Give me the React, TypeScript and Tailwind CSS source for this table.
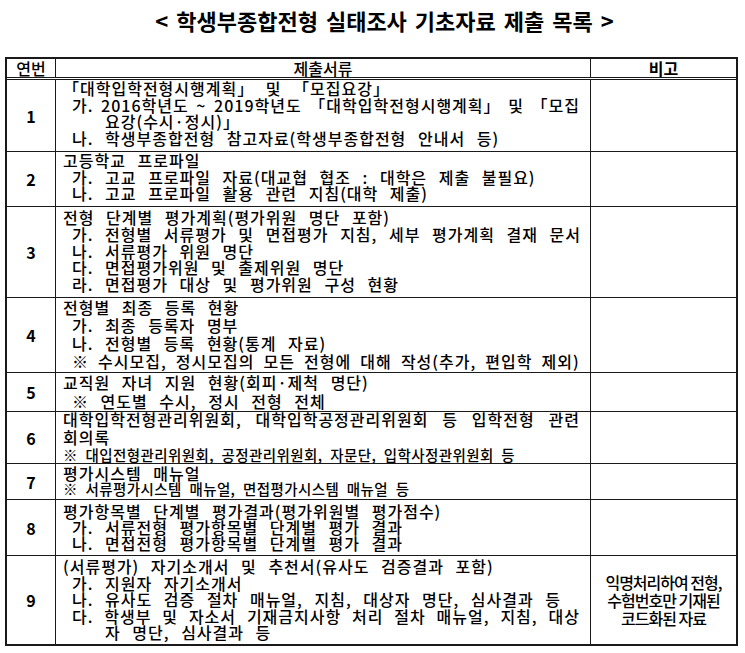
import clsx from "clsx";

type Line = { t: string; i?: number; j?: boolean; s?: boolean; tight?: boolean };
type Row = { no: string; h: string; lead: string; lines: Line[]; note?: string[] };

const rows: Row[] = [
  {
    no: "1",
    h: "h-[72px]",
    lead: "leading-[16.5px]",
    lines: [
      { t: "「대학입학전형시행계획」 및 「모집요강」" },
      { t: "가. 2016학년도 ~ 2019학년도 「대학입학전형시행계획」 및 「모집", i: 1, j: true },
      { t: "요강(수시·정시)」", i: 2 },
      { t: "나. 학생부종합전형 참고자료(학생부종합전형 안내서 등)", i: 1 },
    ],
  },
  {
    no: "2",
    h: "h-[55px]",
    lead: "leading-[16.5px]",
    lines: [
      { t: "고등학교 프로파일" },
      { t: "가. 고교 프로파일 자료(대교협 협조 : 대학은 제출 불필요)", i: 1 },
      { t: "나. 고교 프로파일 활용 관련 지침(대학 제출)", i: 1 },
    ],
  },
  {
    no: "3",
    h: "h-[91px]",
    lead: "leading-[16.8px] pt-[2px]",
    lines: [
      { t: "전형 단계별 평가계획(평가위원 명단 포함)" },
      { t: "가. 전형별 서류평가 및 면접평가 지침, 세부 평가계획 결재 문서", i: 1 },
      { t: "나. 서류평가 위원 명단", i: 1 },
      { t: "다. 면접평가위원 및 출제위원 명단", i: 1 },
      { t: "라. 면접평가 대상 및 평가위원 구성 현황", i: 1 },
    ],
  },
  {
    no: "4",
    h: "h-[75px]",
    lead: "leading-[18px]",
    lines: [
      { t: "전형별 최종 등록 현황" },
      { t: "가. 최종 등록자 명부", i: 1 },
      { t: "나. 전형별 등록 현황(통계 자료)", i: 1 },
      { t: "※ 수시모집, 정시모집의 모든 전형에 대해 작성(추가, 편입학 제외)", i: 1, tight: true },
    ],
  },
  {
    no: "5",
    h: "h-[39px]",
    lead: "leading-[19px]",
    lines: [
      { t: "교직원 자녀 지원 현황(회피·제척 명단)" },
      { t: "※ 연도별 수시, 정시 전형 전체", i: 1 },
    ],
  },
  {
    no: "6",
    h: "h-[52px]",
    lead: "leading-[18px] -mt-[2px]",
    lines: [
      { t: "대학입학전형관리위원회, 대학입학공정관리위원회 등 입학전형 관련", j: true },
      { t: "회의록" },
      { t: "※ 대입전형관리위원회, 공정관리위원회, 자문단, 입학사정관위원회 등", s: true },
    ],
  },
  {
    no: "7",
    h: "h-[36px]",
    lead: "leading-[16px] pt-[1px]",
    lines: [
      { t: "평가시스템 매뉴얼" },
      { t: "※ 서류평가시스템 매뉴얼, 면접평가시스템 매뉴얼 등", s: true },
    ],
  },
  {
    no: "8",
    h: "h-[56px]",
    lead: "leading-[16px] pt-[3px]",
    lines: [
      { t: "평가항목별 단계별 평가결과(평가위원별 평가점수)" },
      { t: "가. 서류전형 평가항목별 단계별 평가 결과", i: 1 },
      { t: "나. 면접전형 평가항목별 단계별 평가 결과", i: 1 },
    ],
  },
  {
    no: "9",
    h: "h-[88px]",
    lead: "leading-[16.5px] pt-[2px]",
    lines: [
      { t: "(서류평가) 자기소개서 및 추천서(유사도 검증결과 포함)" },
      { t: "가. 지원자 자기소개서", i: 1 },
      { t: "나. 유사도 검증 절차 매뉴얼, 지침, 대상자 명단, 심사결과 등", i: 1 },
      { t: "다. 학생부 및 자소서 기재금지사항 처리 절차 매뉴얼, 지침, 대상", i: 1, j: true },
      { t: "자 명단, 심사결과 등", i: 2 },
    ],
    note: ["익명처리하여 전형,", "수험번호만 기재된", "코드화된 자료"],
  },
];

const indent = ["pl-0", "pl-[9px]", "pl-[42px]"];

function TextLine({ line }: { line: Line }) {
  if (line.j) {
    // wrapped line of a justified paragraph: spread the words to the cell's right edge
    return (
      <div
        className={clsx(
          "flex justify-between whitespace-nowrap text-[16px] tracking-[1px]",
          indent[line.i ?? 0]
        )}
      >
        {line.t.split(" ").map((w, k) => (
          <span key={k}>{w}</span>
        ))}
      </div>
    );
  }
  return (
    <div
      className={clsx(
        "whitespace-nowrap",
        indent[line.i ?? 0],
        line.s
          ? "text-[14.5px] tracking-[0.4px] [word-spacing:4px]"
          : line.tight
            ? "text-[16px] tracking-[1px] [word-spacing:4.5px]"
            : "text-[16px] tracking-[1px] [word-spacing:7px]"
      )}
    >
      {line.t}
    </div>
  );
}

export default function App() {
  return (
    <div className="w-[745px] h-[653px] bg-white text-black font-medium font-['Noto_Sans_CJK_KR',sans-serif]">
      <h1 className="pt-[7px] pl-[24px] text-center text-[22px] leading-[26px] font-bold [word-spacing:3px]">
        {"< 학생부종합전형 실태조사 기초자료 제출 목록 >"}
      </h1>

      <div className="mt-[24px] ml-[5px] w-[733px] border-2 border-[#1a1a1a]">
        <div className="grid grid-cols-[49px_535px_1fr] h-[21px] border-b-[3px] border-double border-[#1a1a1a] text-[16px] leading-[18px]">
          <div className="flex items-center justify-center border-r border-[#1a1a1a]">연번</div>
          <div className="flex items-center justify-center border-r border-[#1a1a1a]">제출서류</div>
          <div className="flex items-center justify-center font-bold">비고</div>
        </div>

        {rows.map((row, idx) => (
          <div
            key={row.no}
            className={clsx(
              "grid grid-cols-[49px_535px_1fr]",
              row.h,
              idx < rows.length - 1 && "border-b border-[#1a1a1a]"
            )}
          >
            <div className="flex items-center justify-center border-r border-[#1a1a1a] text-[16px] font-bold">
              {row.no}
            </div>
            <div className="border-r border-[#1a1a1a] pl-[7px] pr-[10px] overflow-hidden">
              <div className={row.lead}>
                {row.lines.map((line, i) => (
                  <TextLine key={i} line={line} />
                ))}
              </div>
            </div>
            <div className="flex flex-col items-center justify-center text-[16px] leading-[18px] tracking-[-1px]">
              {row.note?.map((n) => (
                <div key={n} className="whitespace-nowrap">
                  {n}
                </div>
              ))}
            </div>
          </div>
        ))}
      </div>
    </div>
  );
}
